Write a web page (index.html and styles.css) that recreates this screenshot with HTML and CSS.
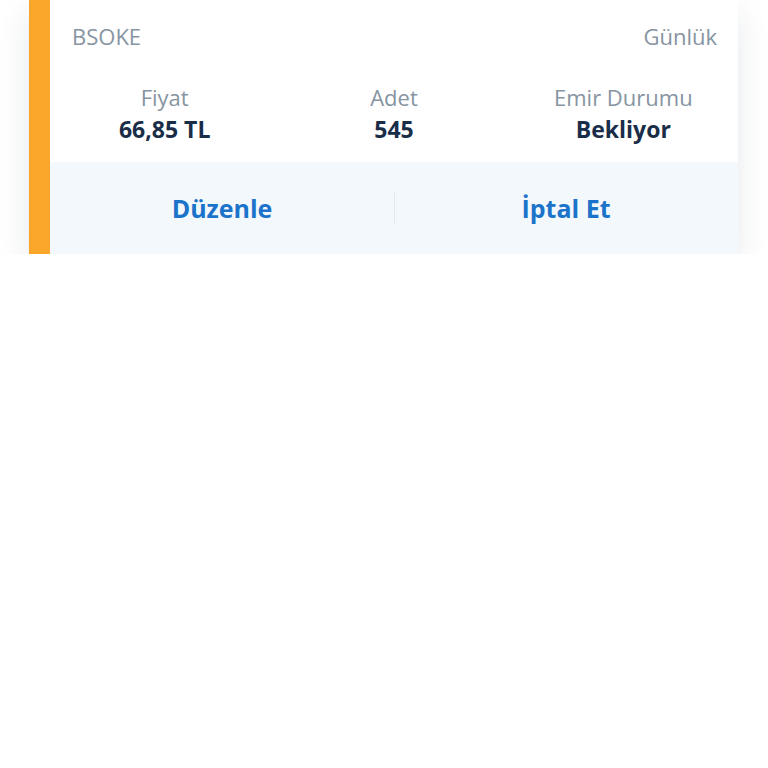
FILE: index.html
```html
<!DOCTYPE html>
<html>
<head>
<meta name="viewport" content="width=device-width, initial-scale=1">
<title>Emirler</title>
<link rel="stylesheet" href="styles.css">
</head>
  <body>
    <div class="order-card">
      <div class="order-head">
        <span class="symbol">BSOKE</span>
        <span class="validity">Günlük</span>
      </div>
      <div class="order-stats">
        <div class="stat">
          <span class="stat-label">Fiyat</span>
          <span class="stat-value">66,85 TL</span>
        </div>
        <div class="stat">
          <span class="stat-label">Adet</span>
          <span class="stat-value">545</span>
        </div>
        <div class="stat">
          <span class="stat-label">Emir Durumu</span>
          <span class="stat-value">Bekliyor</span>
        </div>
      </div>
      <div class="order-actions">
        <button type="button" class="action">Düzenle</button>
        <button type="button" class="action cancel">İptal Et</button>
      </div>
    </div>
  </body>
</html>
```

FILE: styles.css
```css
body {
  margin: 0;
  padding: 0 30px 0 29px;
  background-color: #ffffff;
  font-family: "Open Sans", "Noto Sans", sans-serif;
}

.order-card {
  background-color: #ffffff;
  border-left: 21px solid #f9a62a;
  box-shadow: 0 12px 30px rgba(20, 40, 70, 0.1);
}

.order-head {
  display: flex;
  justify-content: space-between;
  padding: 22px 21px 0 22px;
  font-size: 22px;
  line-height: 28px;
  color: #8794a2;
}

.order-stats {
  display: grid;
  grid-template-columns: 1fr 1fr 1fr;
  margin-top: 31px;
  padding-bottom: 17px;
}

.stat {
  display: flex;
  flex-direction: column;
  align-items: center;
}

.stat-label {
  font-size: 22px;
  line-height: 32px;
  color: #8794a2;
}

.stat-value {
  font-size: 23px;
  line-height: 32px;
  font-weight: 700;
  color: #1a2d48;
}

.order-actions {
  display: flex;
  background-color: #f3f8fd;
  height: 92px;
}

.action {
  flex: 1;
  position: relative;
  background: none;
  border: none;
  padding: 0;
  font-family: inherit;
  font-size: 25px;
  font-weight: 700;
  color: #1b74c9;
  cursor: pointer;
}

.cancel::before {
  content: "";
  position: absolute;
  left: 0;
  top: 30px;
  height: 32px;
  width: 1px;
  background-color: #e2e8ef;
}
```
